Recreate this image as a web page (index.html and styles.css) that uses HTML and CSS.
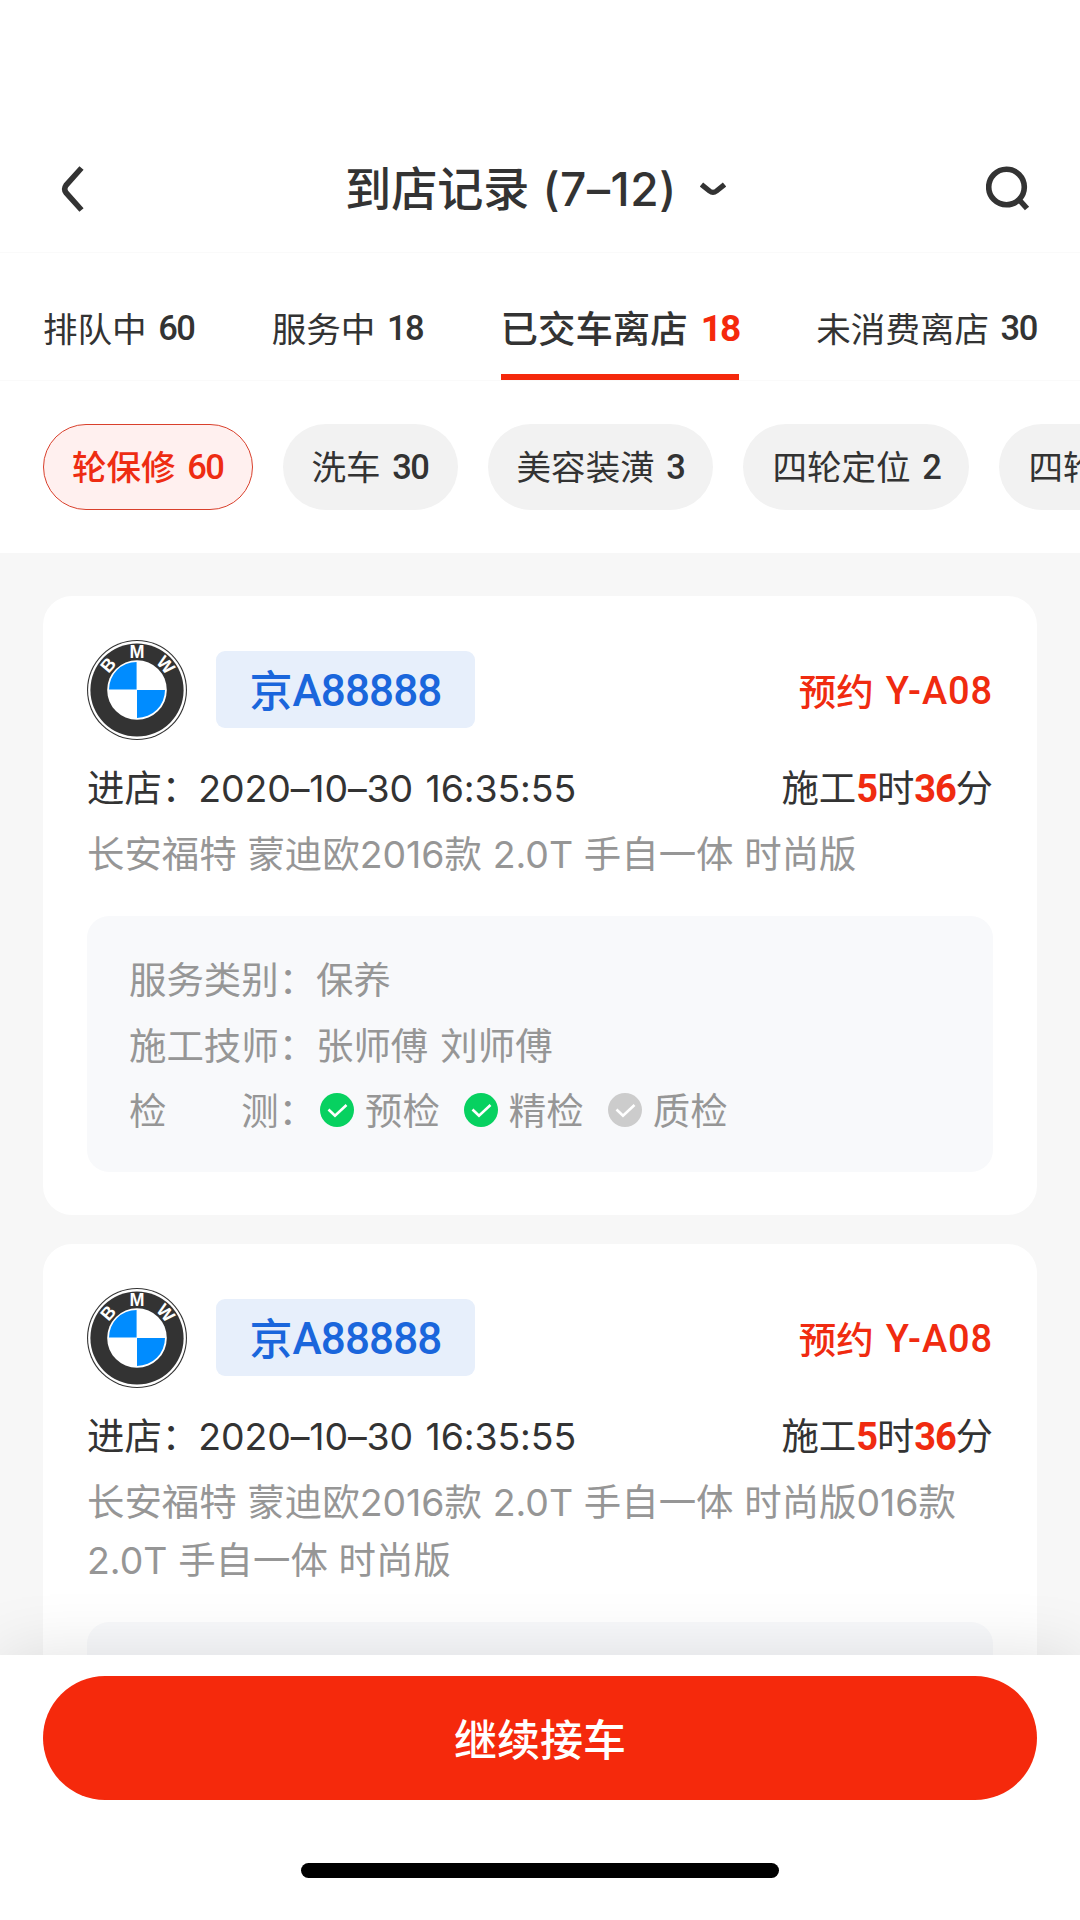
FILE: index.html
```html
<!DOCTYPE html>
<html lang="zh-CN">
<head>
<meta charset="utf-8">
<title>到店记录</title>
<link rel="stylesheet" href="styles.css">
</head>
<body>
<header class="nav">
  <svg class="back" viewBox="0 0 24 46"><path d="M20.5 2L5 19.3Q2.4 23 5 26.7L20.5 44" fill="none" stroke="#333" stroke-width="5.6"/></svg>
  <h1 class="title"><span>到店记录</span><span class="range">(7–12)</span>
    <svg class="caret" viewBox="0 0 26 14"><path d="M1.5 2.5L9.5 9Q13 11.6 16.5 9L24.5 2.5" fill="none" stroke="#333" stroke-width="5.2"/></svg>
  </h1>
  <svg class="search" viewBox="0 0 44 46"><circle cx="20.5" cy="21" r="17.8" fill="none" stroke="#333" stroke-width="5.6"/><path d="M32.5 33L41 42.5" stroke="#333" stroke-width="5.6"/></svg>
</header>

<nav class="tabs">
  <a class="tab">排队中<b class="num">60</b></a>
  <a class="tab">服务中<b class="num">18</b></a>
  <a class="tab active">已交车离店<b class="num">18</b></a>
  <a class="tab">未消费离店<b class="num">30</b></a>
</nav>

<div class="filters">
  <a class="pill active">轮保修<b class="num">60</b></a>
  <a class="pill">洗车<b class="num">30</b></a>
  <a class="pill">美容装潢<b class="num">3</b></a>
  <a class="pill">四轮定位<b class="num">2</b></a>
  <a class="pill">四轮</a>
</div>

<main class="list">
  <article class="card">
    <div class="head">
      <svg class="logo" viewBox="0 0 100 100">
        <circle cx="50" cy="50" r="50" fill="#333"/>
        <circle cx="50" cy="50" r="48.9" fill="#fff"/>
        <circle cx="50" cy="50" r="46.6" fill="#333"/>
        <circle cx="50" cy="50" r="29.8" fill="#fff"/>
        <path d="M49.6 49.6V22A27.6 27.6 0 0 0 22 49.6ZM50 50V78A28 28 0 0 0 78 50Z" fill="#008cff"/>
        <text class="mark" transform="rotate(-49 50 50)" x="50" y="18">B</text>
        <text class="mark" x="50" y="18">M</text>
        <text class="mark" transform="rotate(49 50 50)" x="50" y="18">W</text>
      </svg>
      <div class="plate"><span class="region">京</span><span class="plate-no">A88888</span></div>
      <div class="booking">预约<span class="code">Y-A08</span></div>
    </div>
    <div class="entry">
      <div>进店：<span class="date">2020–10–30 16:35:55</span></div>
      <div>施工<b class="time">5</b>时<b class="time">36</b>分</div>
    </div>
    <p class="model">长安福特 蒙迪欧2016款 2.0T 手自一体 时尚版</p>
    <div class="detail">
      <div class="row"><span class="label">服务类别：</span><span>保养</span></div>
      <div class="row"><span class="label">施工技师：</span><span>张师傅 刘师傅</span></div>
      <div class="row"><span class="label spread"><span>检</span><span>测：</span></span>
        <span class="checks">
          <span class="check"><svg class="tick on" viewBox="0 0 34 34"><circle cx="17" cy="17" r="17" fill="currentColor"/><path d="M8.5 16.5L15 22.8L26.5 12" fill="none" stroke="#fff" stroke-width="2.6"/></svg>预检</span>
          <span class="check"><svg class="tick on" viewBox="0 0 34 34"><circle cx="17" cy="17" r="17" fill="currentColor"/><path d="M8.5 16.5L15 22.8L26.5 12" fill="none" stroke="#fff" stroke-width="2.6"/></svg>精检</span>
          <span class="check"><svg class="tick" viewBox="0 0 34 34"><circle cx="17" cy="17" r="17" fill="currentColor"/><path d="M8.5 16.5L15 22.8L26.5 12" fill="none" stroke="#fff" stroke-width="2.6"/></svg>质检</span>
        </span>
      </div>
    </div>
  </article>

  <article class="card">
    <div class="head">
      <svg class="logo" viewBox="0 0 100 100">
        <circle cx="50" cy="50" r="50" fill="#333"/>
        <circle cx="50" cy="50" r="48.9" fill="#fff"/>
        <circle cx="50" cy="50" r="46.6" fill="#333"/>
        <circle cx="50" cy="50" r="29.8" fill="#fff"/>
        <path d="M49.6 49.6V22A27.6 27.6 0 0 0 22 49.6ZM50 50V78A28 28 0 0 0 78 50Z" fill="#008cff"/>
        <text class="mark" transform="rotate(-49 50 50)" x="50" y="18">B</text>
        <text class="mark" x="50" y="18">M</text>
        <text class="mark" transform="rotate(49 50 50)" x="50" y="18">W</text>
      </svg>
      <div class="plate"><span class="region">京</span><span class="plate-no">A88888</span></div>
      <div class="booking">预约<span class="code">Y-A08</span></div>
    </div>
    <div class="entry">
      <div>进店：<span class="date">2020–10–30 16:35:55</span></div>
      <div>施工<b class="time">5</b>时<b class="time">36</b>分</div>
    </div>
    <p class="model">长安福特 蒙迪欧2016款 2.0T 手自一体 时尚版016款<br>2.0T 手自一体 时尚版</p>
    <div class="detail"></div>
  </article>
</main>

<footer class="bar">
  <button class="submit">继续接车</button>
  <div class="home"></div>
</footer>
</body>
</html>
```
FILE: styles.css
```css
* { box-sizing: border-box; margin: 0; padding: 0; }
body {
  width: 1080px;
  height: 1920px;
  overflow: hidden;
  display: flex;
  flex-direction: column;
  background: #fff;
  color: #333;
  font-family: Inter, "Noto Sans CJK SC", sans-serif;
  font-size: 37.44px;
}

.nav {
  height: 253px;
  padding: 126px 50px 0 61px;
  display: flex;
  align-items: center;
  justify-content: space-between;
  border-bottom: 1px solid #fafafa;
  flex: none;
}
.back { width: 24px; height: 46px; }
.search { width: 44px; height: 46px; }
.title {
  display: flex;
  align-items: center;
  font-size: 46.08px;
  font-weight: 500;
  line-height: 64px;
}
.range { margin-left: 13px; letter-spacing: 0.6px; }
.caret { width: 26px; height: 14px; margin-left: 23px; }

.tabs {
  height: 128px;
  padding: 0 43px;
  display: flex;
  justify-content: space-between;
  border-bottom: 1px solid #fafafa;
  flex: none;
}
.tab {
  display: flex;
  align-items: center;
  font-size: 34.56px;
  padding-top: 26px;
  border-bottom: 6px solid transparent;
}
.tab.active { font-size: 37.44px; font-weight: 500; border-color: #f5290c; }
.num {
  font-family: Roboto, sans-serif;
  font-weight: 500;
  font-size: 34.5px;
  margin: 3px 0 0 11.5px;
  letter-spacing: -1.4px;
}
.tab.active .num { color: #f5290c; font-size: 37px; font-weight: 700; margin-left: 13px; letter-spacing: -2px; }

.filters {
  height: 172px;
  padding: 43px 0 0 43px;
  display: flex;
  align-items: flex-start;
  gap: 30px;
  flex: none;
  overflow: hidden;
}
.pill {
  height: 86px;
  padding: 0 29px 4px;
  border-radius: 43px;
  background: #f2f2f2;
  display: flex;
  align-items: center;
  flex: none;
  white-space: nowrap;
  font-size: 34.56px;
}
.pill .num { margin-top: 4px; }
.pill.active {
  padding: 0 28px 4px;
  border: 1.5px solid #d9402c;
  background: #fff0ef;
  color: #ee2c12;
  font-weight: 500;
}

.list {
  flex: 1;
  min-height: 0;
  overflow: hidden;
  background: #f7f7f7;
  padding: 43px 43px 0;
  display: flex;
  flex-direction: column;
  gap: 29px;
}
.card {
  flex: none;
  background: #fff;
  border-radius: 29px;
  padding: 44px 44px 43px;
}
.head { display: flex; align-items: center; height: 99px; }
.logo { width: 100px; height: 100px; flex: none; }
.mark {
  fill: #fff;
  font: 700 18px "Liberation Sans", sans-serif;
  text-anchor: middle;
}
.plate {
  margin-left: 29px;
  width: 259px;
  height: 77px;
  border-radius: 9px;
  background: #e7effb;
  color: #1a66dc;
  font-size: 43px;
  font-weight: 500;
  display: flex;
  align-items: center;
  justify-content: center;
}
.region { margin-top: -4px; }
.plate-no {
  font-family: Roboto, sans-serif;
  font-size: 44px;
  letter-spacing: -0.9px;
  margin-top: 3px;
}
.booking {
  margin-left: auto;
  color: #f02b10;
  font-weight: 500;
  display: flex;
  align-items: center;
}
.code {
  font-family: Roboto, sans-serif;
  font-size: 38px;
  letter-spacing: 0.9px;
  margin: 3px 0 0 12px;
}
.entry {
  margin-top: 14px;
  height: 66px;
  display: flex;
  align-items: center;
  justify-content: space-between;
}
.date { margin-left: -1px; letter-spacing: -0.1px; word-spacing: 2px; }
.time {
  font-family: Roboto, sans-serif;
  font-weight: 700;
  color: #f02b10;
  font-size: 38px;
  letter-spacing: -1.2px;
}
.model { color: #969696; line-height: 58px; padding-top: 7px; white-space: nowrap; word-spacing: 0.2px; }
.detail {
  margin-top: 32px;
  height: 256px;
  padding: 29px 42px;
  border-radius: 22px;
  background: #f8f9fb;
  color: #969696;
  word-spacing: 1.5px;
}
.row { display: flex; align-items: center; height: 65.8px; }
.label { width: 187px; flex: none; white-space: nowrap; }
.spread { display: flex; justify-content: space-between; }
.checks { display: flex; gap: 24px; margin-left: 4px; }
.check { display: flex; align-items: center; gap: 11px; }
.tick { width: 34px; height: 34px; margin-top: 2px; color: #ccc; }
.tick.on { color: #07d160; }

.bar {
  position: relative;
  flex: none;
  height: 265px;
  padding: 21px 43px 0;
  background: #fff;
  box-shadow: 0 0 64px rgba(10, 10, 20, 0.12);
  display: flex;
  flex-direction: column;
  align-items: center;
}
.submit {
  width: 994px;
  height: 124px;
  padding-bottom: 2px;
  border: 0;
  border-radius: 62px;
  background: #f5290c;
  color: #fff;
  font-family: inherit;
  font-size: 43px;
  font-weight: 500;
}
.home { margin-top: 63px; width: 478px; height: 15px; border-radius: 8px; background: #000; }
```
